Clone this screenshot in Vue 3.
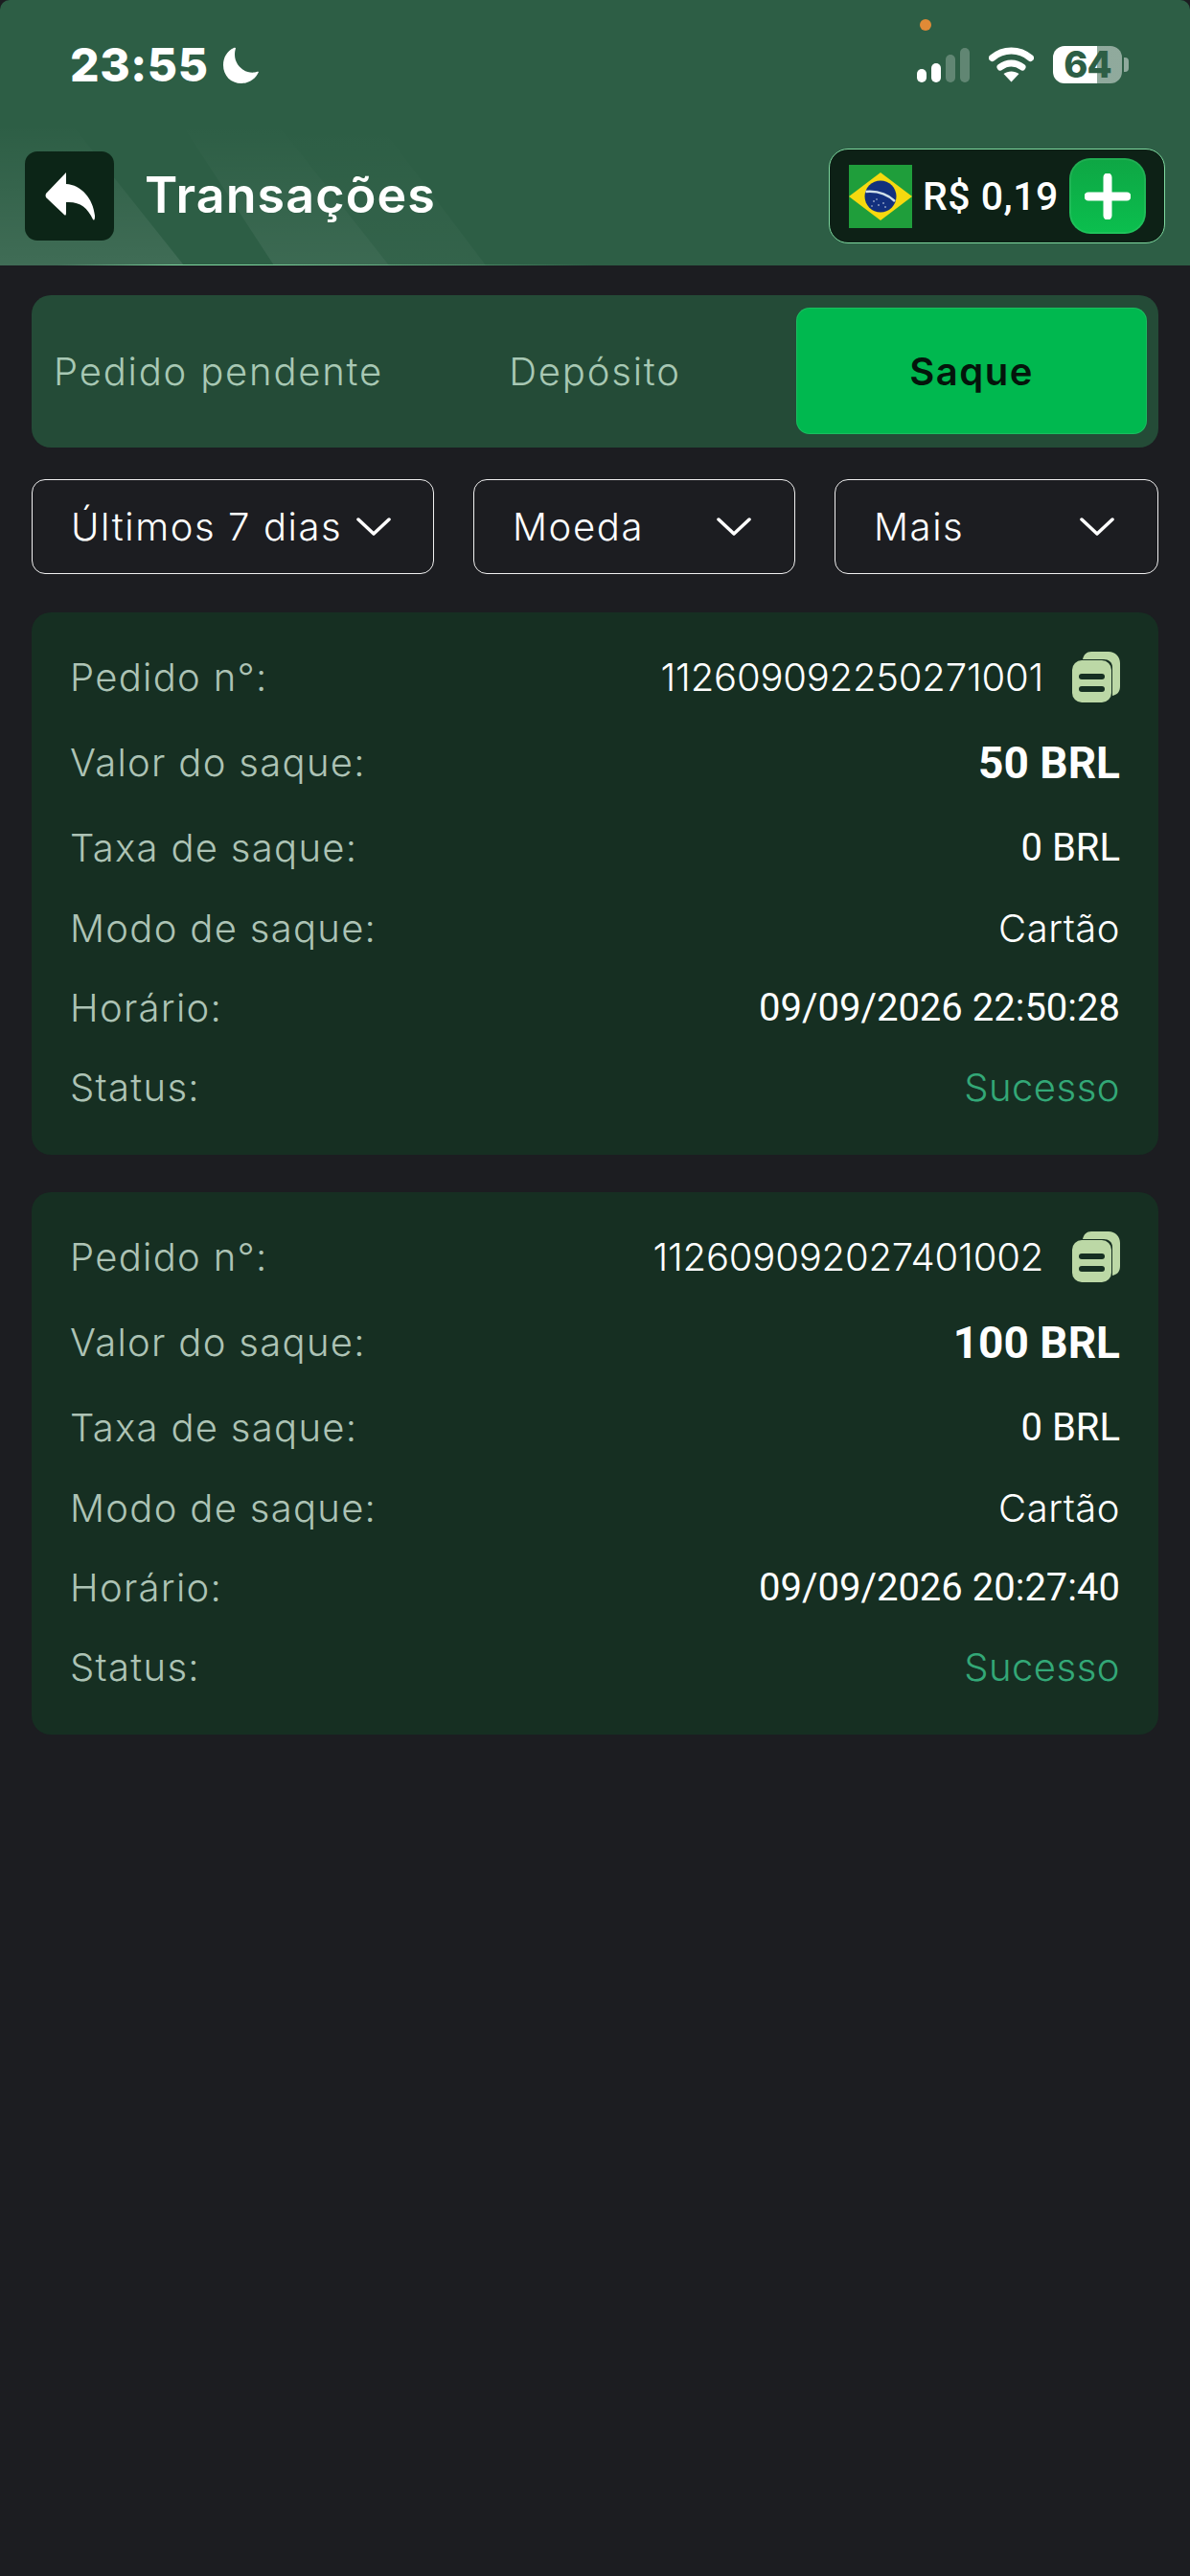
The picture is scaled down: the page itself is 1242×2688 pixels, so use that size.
<script setup>
const tabs = [
  { label: 'Pedido pendente', active: false },
  { label: 'Depósito', active: false },
  { label: 'Saque', active: true },
]
const filters = [
  { label: 'Últimos 7 dias', cls: 'filter-a' },
  { label: 'Moeda', cls: 'filter-b' },
  { label: 'Mais', cls: 'filter-c' },
]
const orders = [
  { id: '112609092250271001', amount: '50 BRL', time: '09/09/2026 22:50:28' },
  { id: '112609092027401002', amount: '100 BRL', time: '09/09/2026 20:27:40' },
]
</script>

<template>
  <div class="page">
    <header class="header">
      <svg class="stripes" width="1242" height="147" viewBox="0 0 1242 147" aria-hidden="true">
        <defs>
          <linearGradient id="band" x1="0" y1="0" x2="0" y2="1">
            <stop offset="0" stop-color="#fff" stop-opacity="0" />
            <stop offset="1" stop-color="#fff" stop-opacity="0.09" />
          </linearGradient>
        </defs>
        <polygon points="0,0 75,0 192,147 0,147" fill="url(#band)" />
        <polygon points="190,0 290,0 406,147 286,147" fill="url(#band)" opacity="0.8" />
        <polygon points="290,0 396,0 507,147 406,147" fill="url(#band)" opacity="0.35" />
      </svg>
      <div class="status">
        <div class="status-left">
          <span class="time">23:55</span>
          <svg class="moon" width="38" height="38" viewBox="0 0 38 38">
            <path d="M11 1C4 4 0 11 0 19c0 11 8 19 19 19 8 0 15-5 18-12-1-.5-2 0-4 .5C22 28 12 19 12 8c0-3 .5-5 1-6.500 0-1-1-1-2-.5z" fill="#fff" />
          </svg>
        </div>
        <span class="rec-dot"></span>
        <div class="status-right">
          <div class="signal">
            <i class="bar b1"></i><i class="bar b2"></i><i class="bar b3"></i><i class="bar b4"></i>
          </div>
          <svg class="wifi" width="47" height="38" viewBox="0 0 47 38">
            <g fill="none" stroke="#fff" stroke-width="7" stroke-linecap="round">
              <path d="M3.500 12.500C15 2.500 32 2.500 43.500 12.500" />
              <path d="M12 22c7-5.500 16-5.500 23 0" />
            </g>
            <path d="M23.500 37.500l-8-8.500c4.500-3.500 11.500-3.500 16 0z" fill="#fff" />
          </svg>
          <div class="battery">
            <span class="battery-body">64</span>
            <i class="battery-nub"></i>
          </div>
        </div>
      </div>
      <div class="nav">
        <button class="back" type="button" aria-label="Voltar">
          <svg width="52" height="52" viewBox="0 0 52 52">
            <path d="M22 1L1 23q-1 2 0 4l19 18q2 2 2-2V32c14-1 22 5 28 18 2 2 2-2 2-4C50 28 38 14 22 13z" fill="#fff" />
          </svg>
        </button>
        <h1 class="title">Transações</h1>
        <div class="wallet">
          <svg class="flag" width="66" height="66" viewBox="0 0 66 66">
            <rect width="66" height="66" fill="#1f9e3b" />
            <polygon points="33,8 66,33 33,58 0,33" fill="#f6d90f" />
            <circle cx="33" cy="33" r="16.500" fill="#12307e" />
            <path d="M17.500 28c11-1 22 2 30.500 10" fill="none" stroke="#cfe0ea" stroke-width="2.500" />
            <g fill="#dfe8f2">
              <circle cx="26" cy="38" r=".8" /><circle cx="31" cy="42" r=".8" /><circle cx="36" cy="40" r=".8" />
              <circle cx="29" cy="36" r=".7" /><circle cx="38" cy="44" r=".8" /><circle cx="24" cy="43" r=".7" />
            </g>
          </svg>
          <span class="balance">R$ 0,19</span>
          <button class="add" type="button" aria-label="Adicionar">
            <svg width="48" height="48" viewBox="0 0 48 48">
              <path d="M24 4v40M4 24h40" stroke="#fff" stroke-width="9" stroke-linecap="round" />
            </svg>
          </button>
        </div>
      </div>
    </header>

    <main class="content">
      <div class="tabs">
        <div v-for="t in tabs" :key="t.label" class="tab" :class="{ active: t.active }">{{ t.label }}</div>
      </div>

      <div class="filters">
        <div v-for="f in filters" :key="f.label" class="filter" :class="f.cls">
          <span>{{ f.label }}</span>
          <svg width="36" height="20" viewBox="0 0 36 20">
            <path d="M2 2l16 15L34 2" fill="none" stroke="#fff" stroke-width="3.500" stroke-linecap="round" stroke-linejoin="round" />
          </svg>
        </div>
      </div>

      <section v-for="o in orders" :key="o.id" class="card">
        <div class="row row-id">
          <span class="label">Pedido n°:</span>
          <span class="value id-wrap">
            <span class="order-id">{{ o.id }}</span>
            <svg class="copy" width="50" height="53" viewBox="0 0 50 53">
              <path d="M20 0h18c7 0 12 5 12 12v24c0 6-3 9-8 10V16c0-5-4-8-9-8H11c1-5 4-8 9-8z" fill="#bcd8a6" />
              <rect x="0" y="9" width="41" height="44" rx="10" fill="#bcd8a6" />
              <rect x="7" y="23" width="27" height="6" rx="3" fill="#162f22" />
              <rect x="7" y="36" width="27" height="6" rx="3" fill="#162f22" />
            </svg>
          </span>
        </div>
        <div class="row row-strong">
          <span class="label">Valor do saque:</span>
          <span class="amount">{{ o.amount }}</span>
        </div>
        <div class="row row-fee">
          <span class="label">Taxa de saque:</span>
          <span class="num">0 BRL</span>
        </div>
        <div class="row">
          <span class="label">Modo de saque:</span>
          <span class="value">Cartão</span>
        </div>
        <div class="row">
          <span class="label">Horário:</span>
          <span class="num">{{ o.time }}</span>
        </div>
        <div class="row">
          <span class="label">Status:</span>
          <span class="value success">Sucesso</span>
        </div>
      </section>
    </main>
  </div>
</template>

<style>
html, body { margin: 0; background: #1c1d21; }
</style>

<style scoped>
.page {
  width: 1242px;
  height: 2688px;
  overflow: hidden;
  background: #1c1d21;
  font-family: Inter, "Liberation Sans", sans-serif;
}
.header {
  position: relative;
  height: 277px;
  box-sizing: border-box;
  background: #2d5e45;
  border-radius: 10px 10px 0 0;
  display: flex;
  flex-direction: column;
}
.header::after {
  content: "";
  position: absolute;
  left: 0;
  right: 0;
  bottom: 0;
  height: 1px;
  background: linear-gradient(90deg, transparent 60px, #7fd9a0 180px, #7fd9a0 260px, transparent 620px);
}
.stripes { position: absolute; left: 0; bottom: 0; }
.status {
  position: relative;
  height: 155px;
  box-sizing: border-box;
  padding: 47px 64px 0 73px;
  display: flex;
  justify-content: space-between;
  align-items: flex-start;
}
.status-left { display: flex; align-items: center; gap: 15px; height: 42px; }
.time { color: #fff; font-size: 48px; font-weight: 800; letter-spacing: .6px; line-height: 42px; }
.moon { display: block; }
.rec-dot {
  position: absolute;
  left: 960px;
  top: 20px;
  width: 12px;
  height: 12px;
  border-radius: 50%;
  background: #e08a36;
}
.status-right { display: flex; align-items: center; gap: 20px; height: 40px; }
.signal { display: flex; align-items: flex-end; gap: 5px; height: 37px; }
.bar { display: block; width: 10px; border-radius: 5px; background: #fff; }
.b1 { height: 14px; }
.b2 { height: 20px; }
.b3 { height: 29px; background: rgba(255, 255, 255, .25); }
.b4 { height: 36px; background: rgba(255, 255, 255, .25); }
.wifi { display: block; }
.battery { display: flex; align-items: center; gap: 2px; }
.battery-body {
  width: 72px;
  height: 39px;
  border-radius: 12px;
  display: flex;
  align-items: center;
  justify-content: center;
  background: linear-gradient(90deg, #fff 0, #fff 46px, rgba(255, 255, 255, .47) 46px);
  color: #2d5e45;
  font-size: 38px;
  font-weight: 800;
  letter-spacing: -1px;
}
.battery-nub {
  width: 5px;
  height: 15px;
  border-radius: 0 4px 4px 0;
  background: rgba(255, 255, 255, .47);
}
.nav {
  position: relative;
  height: 99px;
  padding: 0 26px;
  display: flex;
  align-items: center;
}
.back {
  width: 93px;
  height: 93px;
  padding: 0;
  border: 0;
  border-radius: 13px;
  background: #0c2517;
  display: flex;
  align-items: center;
  justify-content: center;
}
.title {
  margin: -2px 0 0 32px;
  color: #fff;
  font-size: 52px;
  font-weight: 600;
  letter-spacing: 1.100px;
  line-height: 60px;
  flex: 1;
}
.wallet {
  width: 351px;
  height: 99px;
  box-sizing: border-box;
  border: 1.500px solid #7fd9a0;
  border-radius: 20px;
  background: #0d2116;
  padding-left: 20px;
  display: flex;
  align-items: center;
}
.flag { display: block; flex: none; }
.balance {
  margin-left: 11px;
  width: 153px;
  color: #fff;
  font-family: Roboto, sans-serif;
  font-size: 41px;
  font-weight: 500;
  letter-spacing: .5px;
  white-space: nowrap;
}
.add {
  width: 80px;
  height: 79px;
  padding: 0;
  border: 0;
  border-radius: 22px;
  background: linear-gradient(180deg, #0ea644, #0bbf4e);
  box-shadow: inset 0 0 0 2px rgba(255, 255, 255, .08);
  display: flex;
  align-items: center;
  justify-content: center;
}
.content { padding: 31px 33px 0; display: flex; flex-direction: column; }
.tabs {
  height: 159px;
  box-sizing: border-box;
  padding: 13px 12px 14px;
  border-radius: 20px;
  background: #244b37;
  display: grid;
  grid-template-columns: repeat(3, 1fr);
  gap: 27px;
}
.tab {
  display: flex;
  align-items: center;
  justify-content: center;
  color: #a8c8b4;
  font-size: 40px;
  font-weight: 300;
  letter-spacing: 1.800px;
  white-space: nowrap;
  border-radius: 14px;
}
.tab.active {
  background: #00b84f;
  box-shadow: inset 0 0 0 1px rgba(255, 255, 255, .1);
  color: #04150b;
  font-weight: 600;
  letter-spacing: 1.500px;
}
.filters { margin-top: 33px; display: flex; justify-content: space-between; }
.filter {
  height: 99px;
  box-sizing: border-box;
  border: 1.500px solid #f0f0f0;
  border-radius: 14px;
  display: flex;
  align-items: center;
  justify-content: space-between;
  padding: 0 45px 0 40px;
  color: #fff;
  font-size: 40px;
  font-weight: 300;
  letter-spacing: 1.600px;
  white-space: nowrap;
}
.filter-a { width: 420px; padding-right: 44px; }
.filter-b { width: 336px; }
.filter-c { width: 338px; }
.card {
  margin-top: 40px;
  padding: 25px 40px 29px;
  border-radius: 20px;
  background: #162f22;
}
.card + .card { margin-top: 39px; }
.row {
  min-height: 83px;
  display: flex;
  align-items: center;
  justify-content: space-between;
  white-space: nowrap;
}
.row-id, .row-fee { min-height: 85px; }
.row-strong { min-height: 93px; }
.label {
  color: #adc3b5;
  font-size: 40px;
  font-weight: 300;
  letter-spacing: 1.300px;
}
.value {
  color: #fff;
  font-size: 40px;
  font-weight: 300;
  letter-spacing: .5px;
}
.id-wrap { display: flex; align-items: center; gap: 30px; }
.order-id { letter-spacing: -.2px; }
.copy { display: block; }
.amount {
  color: #fff;
  font-family: Roboto, sans-serif;
  font-size: 46px;
  font-weight: 700;
}
.num {
  color: #fff;
  font-family: Roboto, sans-serif;
  font-size: 40px;
  font-weight: 400;
}
.value.success { color: #33a877; }
</style>
